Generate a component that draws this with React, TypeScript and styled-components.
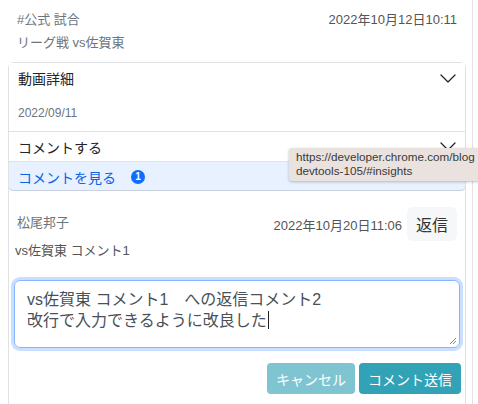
import React from "react";
import styled, { createGlobalStyle } from "styled-components";

const Global = createGlobalStyle`
  html, body { margin: 0; padding: 0; background: #fff; }
  body {
    font-family: "Liberation Sans", "Noto Sans CJK JP", sans-serif;
    color: #212529;
    -webkit-font-smoothing: antialiased;
  }
  * { box-sizing: border-box; }
`;

const Frame = styled.div`
  position: relative;
  width: 478px;
  min-height: 404px;
  overflow: hidden;
`;

const Page = styled.div`
  width: 473px;
  min-height: 404px;
  padding: 11px 6px 0 8px;
  border-right: 1px solid #e2e2e2;
  display: flex;
  flex-direction: column;
`;

const Meta = styled.div`
  padding: 0 9px;
  margin-bottom: 10px;
  font-size: 13px;
  line-height: 18px;
  color: #6c757d;
`;

const MetaRow = styled.div<{ $gap?: number }>`
  display: flex;
  justify-content: space-between;
  margin-top: ${(p) => p.$gap ?? 0}px;
`;

const MetaDate = styled.span`
  color: #555;
`;

const Card = styled.div`
  flex: 1;
  border: 1px solid #dee2e6;
  border-bottom: none;
  border-radius: 6px 6px 0 0;
  display: flex;
  flex-direction: column;
`;

const Header = styled.div<{ $h: number; $active?: boolean; $line?: boolean }>`
  display: flex;
  align-items: center;
  justify-content: space-between;
  height: ${(p) => p.$h}px;
  padding: 0 9px;
  font-size: 14px;
  color: ${(p) => (p.$active ? "#0c63e4" : "#212529")};
  background: ${(p) => (p.$active ? "#e7f1ff" : "#fff")};
  border-bottom: ${(p) => (p.$line ? "1px solid #dee2e6" : "none")};
  border-radius: ${(p) => (p.$active ? "0 0 4px 4px" : "0")};
  box-shadow: ${(p) => (p.$active ? "inset 0 -1px 0 rgba(0,0,0,.125)" : "none")};
`;

const HeaderLabel = styled.span`
  display: flex;
  align-items: center;
`;

const Badge = styled.span`
  display: inline-flex;
  align-items: center;
  justify-content: center;
  width: 14px;
  height: 14px;
  margin-left: 15px;
  border-radius: 50%;
  background: #0d6efd;
  color: #fff;
  font-size: 10px;
  font-weight: 700;
`;

const Chevron = styled.svg<{ $up?: boolean }>`
  width: 16px;
  height: 9px;
  transform: ${(p) => (p.$up ? "rotate(180deg)" : "none")};
`;

const DetailBody = styled.div`
  padding: 11px 9px 9px;
  font-size: 12px;
  line-height: 18px;
  color: #6c757d;
  border-bottom: 1px solid #dee2e6;
`;

const CommentBody = styled.div`
  padding: 16px 0 0;
`;

const CommentHead = styled.div`
  display: flex;
  align-items: center;
  height: 34px;
  padding: 0 8px;
  font-size: 13px;
`;

const Author = styled.span`
  flex: 1;
  color: #6c757d;
  margin-top: -6px;
`;

const CommentDate = styled.span`
  color: #555;
  margin-right: 5px;
`;

const ReplyButton = styled.button`
  width: 50px;
  height: 34px;
  border: none;
  border-radius: 6px;
  background: #f6f7f8;
  color: #333;
  font: inherit;
  font-size: 16px;
  padding: 0;
`;

const CommentText = styled.div`
  margin-top: 1px;
  padding: 0 6px;
  font-size: 13px;
  line-height: 18px;
  color: #555;
`;

const TextBox = styled.div`
  position: relative;
  margin: 20px 5px 0 5px;
  height: 68px;
  padding: 8px 12px;
  border: 1px solid #86b7fe;
  border-radius: 6px;
  box-shadow: 0 0 0 3px rgba(13, 110, 253, 0.22);
  font-size: 16px;
  line-height: 21px;
  color: #495057;
  white-space: pre-wrap;
`;

const Caret = styled.span`
  display: inline-block;
  width: 1px;
  height: 18px;
  margin-left: 1px;
  vertical-align: -3px;
  background: #222;
`;

const Grip = styled.svg`
  position: absolute;
  right: 2px;
  bottom: 2px;
  width: 8px;
  height: 8px;
`;

const Actions = styled.div`
  display: flex;
  justify-content: flex-end;
  gap: 4px;
  margin-top: 15px;
  padding-right: 4px;
`;

const ActionButton = styled.button<{ $disabled?: boolean }>`
  height: 31px;
  padding: 0 9px;
  border: none;
  border-radius: 4px;
  font: inherit;
  font-size: 14px;
  color: #fff;
  background: ${(p) => (p.$disabled ? "#7ec4d1" : "#32a2b6")};
`;

const Tooltip = styled.div`
  position: absolute;
  left: 289px;
  top: 148px;
  width: 200px;
  padding: 2px 7px 3px;
  background: #e9e2df;
  border-radius: 3px;
  box-shadow: 0 1px 3px rgba(0, 0, 0, 0.25);
  font-family: "Liberation Sans", sans-serif;
  font-size: 11.7px;
  line-height: 14px;
  color: #3a3a3a;
  white-space: nowrap;
`;

const Down = ({ up, color }: { up?: boolean; color: string }) => (
  <Chevron $up={up} viewBox="0 0 16 9">
    <path d="M1 1 L8 8 L15 1" fill="none" stroke={color} strokeWidth="1.3" strokeLinecap="round" strokeLinejoin="round" />
  </Chevron>
);

export default function App() {
  return (
    <Frame>
      <Global />
      <Page>
        <Meta>
          <MetaRow>
            <span>#公式 試合</span>
            <MetaDate>2022年10月12日10:11</MetaDate>
          </MetaRow>
          <MetaRow $gap={5}>
            <span>リーグ戦 vs佐賀東</span>
          </MetaRow>
        </Meta>
        <Card>
          <Header $h={30}>
            <span>動画詳細</span>
            <Down color="#212529" />
          </Header>
          <DetailBody>2022/09/11</DetailBody>
          <Header $h={30} $line>
            <span>コメントする</span>
            <Down color="#212529" />
          </Header>
          <Header $h={29} $active>
            <HeaderLabel>
              コメントを見る
              <Badge>1</Badge>
            </HeaderLabel>
            <Down up color="#0c63e4" />
          </Header>
          <CommentBody>
            <CommentHead>
              <Author>松尾邦子</Author>
              <CommentDate>2022年10月20日11:06</CommentDate>
              <ReplyButton>返信</ReplyButton>
            </CommentHead>
            <CommentText>vs佐賀東 コメント1</CommentText>
            <TextBox role="textbox">
              {"vs佐賀東 コメント1　への返信コメント2\n改行で入力できるように改良した"}
              <Caret />
              <Grip viewBox="0 0 8 8">
                <path d="M7 1 L1 7 M7 4 L4 7" stroke="#777" strokeWidth="0.9" />
              </Grip>
            </TextBox>
            <Actions>
              <ActionButton $disabled>キャンセル</ActionButton>
              <ActionButton>コメント送信</ActionButton>
            </Actions>
          </CommentBody>
        </Card>
      </Page>
      <Tooltip>
        https://developer.chrome.com/blog
        <br />
        devtools-105/#insights
      </Tooltip>
    </Frame>
  );
}
